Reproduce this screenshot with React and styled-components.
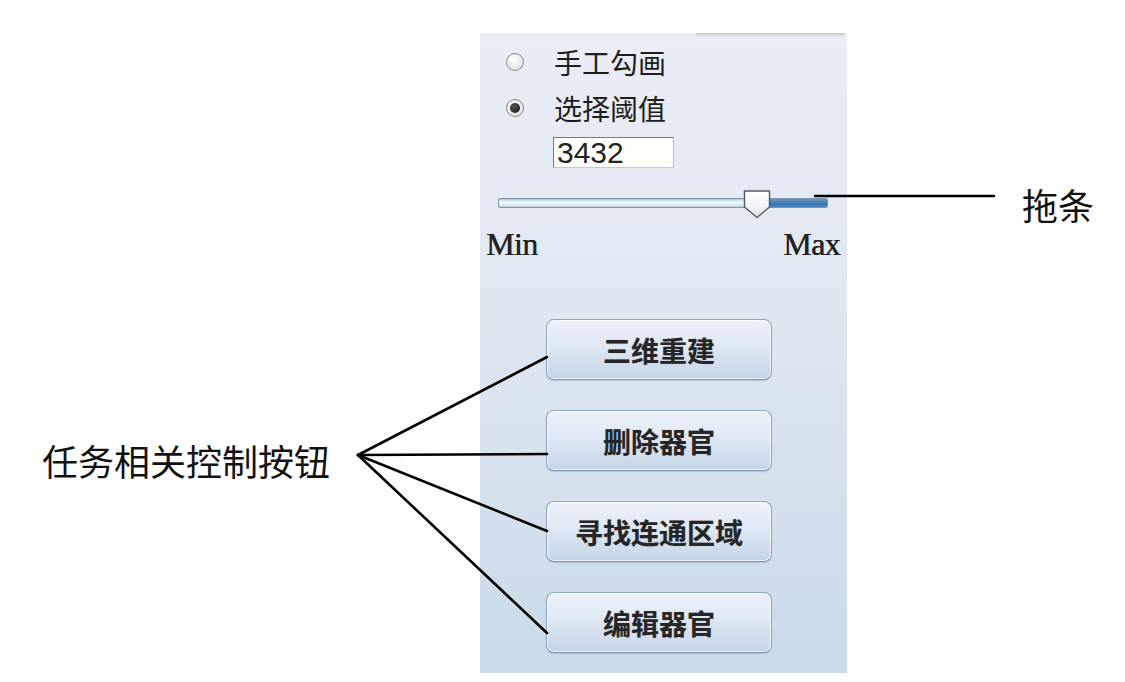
import React from "react";
import styled, { createGlobalStyle } from "styled-components";

const GlobalStyle = createGlobalStyle`
  html, body {
    margin: 0;
    padding: 0;
    background: #ffffff;
  }
`;

const Page = styled.div`
  position: relative;
  width: 1125px;
  height: 682px;
  display: flex;
  background: #ffffff;
  font-family: "Noto Sans CJK SC", "Noto Sans", sans-serif;
  overflow: hidden;
`;

const LeftNote = styled.div`
  width: 480px;
  padding: 442px 0 0 42px;
  box-sizing: border-box;
`;

const RightNote = styled.div`
  flex: 1;
  padding: 186px 0 0 175px;
  box-sizing: border-box;
`;

const NoteText = styled.div`
  font-size: 36px;
  line-height: 36px;
  color: #111;
  white-space: nowrap;
`;

const Panel = styled.div`
  position: relative;
  margin-top: 33px;
  width: 367px;
  height: 640px;
  box-sizing: border-box;
  padding-top: 6px;
  background: linear-gradient(
    180deg,
    #e9edf5 0%,
    #e3e9f2 35%,
    #d6e1ed 70%,
    #c9dae9 100%
  );
  display: flex;
  flex-direction: column;

  &::before {
    content: "";
    position: absolute;
    top: 0;
    left: 216px;
    right: 3px;
    height: 4px;
    background: linear-gradient(180deg, #c2c4c8, rgba(220, 226, 234, 0));
  }
`;

const RadioRow = styled.label`
  display: flex;
  align-items: center;
  height: 46px;
  padding-left: 26px;
  gap: 30px;
  font-size: 28px;
  color: #1e1e1e;
`;

const RadioDot = styled.span`
  width: 18px;
  height: 18px;
  border-radius: 50%;
  box-sizing: border-box;
  border: 1.5px solid #8a8a8a;
  background: radial-gradient(circle at 40% 35%, #ffffff 0%, #e4e4e4 70%, #cfcfcf 100%);
  display: flex;
  align-items: center;
  justify-content: center;

  &::after {
    content: "";
    width: 10px;
    height: 10px;
    border-radius: 50%;
    background: ${(p) => (p.$checked ? "radial-gradient(circle at 40% 35%, #555, #111)" : "transparent")};
  }
`;

const ValueBox = styled.div`
  margin: 6px 0 0 73px;
  width: 121px;
  height: 31px;
  box-sizing: border-box;
  border: 1px solid #7a7a7a;
  border-right-color: #bdbdbd;
  border-bottom-color: #c8c8c8;
  background: #fffefa;
  font-family: "Liberation Sans", Arial, sans-serif;
  font-size: 30px;
  line-height: 29px;
  padding-left: 3px;
  color: #222;
`;

const SliderWrap = styled.div`
  position: relative;
  margin: 20px 0 0 18px;
  width: 330px;
  height: 30px;
`;

const Track = styled.div`
  position: absolute;
  left: 0;
  right: 0;
  top: 10px;
  height: 10px;
  box-sizing: border-box;
  border: 1px solid #7d93a9;
  border-radius: 2px;
  background: linear-gradient(180deg, #aac3da 0%, #f4f8fc 35%, #e4eef7 70%, #b8cde0 100%);
  overflow: hidden;
`;

const TrackFill = styled.div`
  position: absolute;
  top: 0;
  bottom: 0;
  right: 0;
  background: linear-gradient(180deg, #6796c6 0%, #3d77b5 60%, #4c84bd 100%);
`;

const Thumb = styled.svg`
  position: absolute;
  top: 2px;
  width: 28px;
  height: 29px;
`;

const ScaleRow = styled.div`
  display: flex;
  justify-content: space-between;
  padding: 8px 7px 0 6px;
  font-family: "Liberation Serif", "Times New Roman", serif;
  font-size: 32px;
  line-height: 36px;
  color: #222;
  letter-spacing: -0.6px;
  text-shadow: 0.4px 0 0 #222;
`;

const ButtonList = styled.div`
  margin: 57px 0 0 66px;
  display: flex;
  flex-direction: column;
  gap: 30px;
`;

const TaskButton = styled.button`
  width: 226px;
  height: 61px;
  box-sizing: border-box;
  border: 1px solid #8ea6c0;
  border-bottom-color: #7f97b3;
  border-radius: 8px;
  background: linear-gradient(
    180deg,
    #edf2fa 0%,
    #dfe8f4 45%,
    #cfdcec 80%,
    #c3d3e7 100%
  );
  box-shadow: inset 0 0 0 1px rgba(255, 255, 255, 0.75), 0 1px 1px rgba(120, 140, 165, 0.35);
  font-family: "Noto Sans CJK SC", "Noto Sans", sans-serif;
  font-weight: 700;
  font-size: 28px;
  line-height: 1;
  color: #262626;
  text-shadow: 0 0 1px rgba(0, 0, 0, 0.25);
  cursor: pointer;
  padding: 0;
`;

const Leaders = styled.svg`
  position: absolute;
  left: 0;
  top: 0;
  width: 1125px;
  height: 682px;
  pointer-events: none;
`;

const buttons = ["三维重建", "删除器官", "寻找连通区域", "编辑器官"];

const slider = { value: 3432, min: 0, max: 4300 };

export default function App() {
  const ratio = (slider.value - slider.min) / (slider.max - slider.min);
  const thumbLeft = Math.round(ratio * 330) - 18;

  return (
    <Page>
      <GlobalStyle />
      <LeftNote>
        <NoteText>任务相关控制按钮</NoteText>
      </LeftNote>

      <Panel>
        <RadioRow>
          <RadioDot />
          手工勾画
        </RadioRow>
        <RadioRow>
          <RadioDot $checked />
          选择阈值
        </RadioRow>
        <ValueBox>{slider.value}</ValueBox>

        <SliderWrap>
          <Track>
            <TrackFill style={{ left: thumbLeft + 24 }} />
          </Track>
          <Thumb style={{ left: thumbLeft }} viewBox="0 0 28 29">
            <defs>
              <linearGradient id="thumbFill" x1="0" y1="0" x2="0" y2="1">
                <stop offset="0" stopColor="#ffffff" />
                <stop offset="0.6" stopColor="#f1f3f6" />
                <stop offset="1" stopColor="#d8dee6" />
              </linearGradient>
            </defs>
            <path
              d="M1.5 1 H26.5 V17 L14 27.5 L1.5 17 Z"
              fill="url(#thumbFill)"
              stroke="#555b63"
              strokeWidth="1.4"
              strokeLinejoin="round"
            />
          </Thumb>
        </SliderWrap>

        <ScaleRow>
          <span>Min</span>
          <span>Max</span>
        </ScaleRow>

        <ButtonList>
          {buttons.map((label) => (
            <TaskButton key={label}>{label}</TaskButton>
          ))}
        </ButtonList>
      </Panel>

      <RightNote>
        <NoteText>拖条</NoteText>
      </RightNote>

      <Leaders viewBox="0 0 1125 682">
        <g stroke="#000" strokeWidth="2.6" fill="none" strokeLinecap="round">
          <line x1="815" y1="196" x2="994" y2="196" />
          <line x1="358" y1="455" x2="547" y2="357" />
          <line x1="358" y1="455" x2="547" y2="454" />
          <line x1="358" y1="455" x2="547" y2="531" />
          <line x1="358" y1="455" x2="547" y2="633" />
        </g>
      </Leaders>
    </Page>
  );
}
